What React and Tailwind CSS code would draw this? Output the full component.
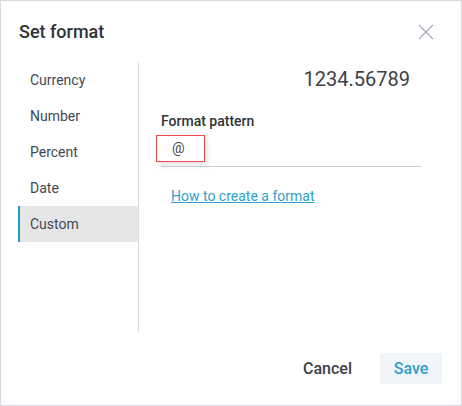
const formats = ['Currency', 'Number', 'Percent', 'Date', 'Custom'];

export default function App() {
  const active = 'Custom';

  return (
    <div className="w-[462px] h-[406px] bg-white border border-[#d6d9dd] flex flex-col font-['Roboto',sans-serif]">
      <div className="flex items-center justify-between pl-[18px] pr-[27px] h-[61px]">
        <h1 className="text-[18px] font-medium text-[#2f3338]">Set format</h1>
        <button className="text-[#a4acb6]">
          <svg width="16" height="16" viewBox="0 0 16 16" fill="none" stroke="currentColor" strokeWidth="1.2">
            <path d="M1 1L15 15M15 1L1 15" />
          </svg>
        </button>
      </div>

      <div className="flex h-[270px]">
        <div className="w-[121px] ml-[17px] border-r border-[#dcdcdc]">
          {formats.map((f) => (
            <div
              key={f}
              className={
                f === active
                  ? 'h-[36px] flex items-center pl-[10px] text-[14px] text-[#3f4a56] bg-[#e6e6e6] border-l-2 border-[#1b9dc1]'
                  : 'h-[36px] flex items-center pl-[12px] text-[14px] text-[#3f4a56]'
              }
            >
              {f}
            </div>
          ))}
        </div>

        <div className="flex-1 pl-[22px] pr-[40px]">
          <div className="text-right text-[20px] text-[#3b4148] pt-[4px] pr-[11px] leading-[26px]">1234.56789</div>
          <div className="mt-[20px] text-[14px] font-medium text-[#2f3338] leading-[18px]">Format pattern</div>
          <div className="mt-[2px] border-b border-[#c9d1dc] h-[35px] relative">
            <div className="absolute left-[-5px] top-[3px] w-[49px] h-[27px] border border-[#f0474a] shadow-[2px_3px_6px_rgba(0,0,0,0.12)] flex items-center pl-[15px] text-[14px] text-[#3f4a56]">
              @
            </div>
          </div>
          <a href="#" className="block mt-[20px] ml-[10px] text-[14px] text-[#2f9fcb] underline leading-[18px]">
            How to create a format
          </a>
        </div>
      </div>

      <div className="flex justify-end items-center gap-[28px] pr-[19px] mt-[21px]">
        <button className="text-[16px] font-medium text-[#3b4148]">Cancel</button>
        <button className="w-[62px] h-[31px] rounded-[2px] bg-[#f1f4f8] text-[16px] font-medium text-[#2f9fcb]">Save</button>
      </div>
    </div>
  );
}
